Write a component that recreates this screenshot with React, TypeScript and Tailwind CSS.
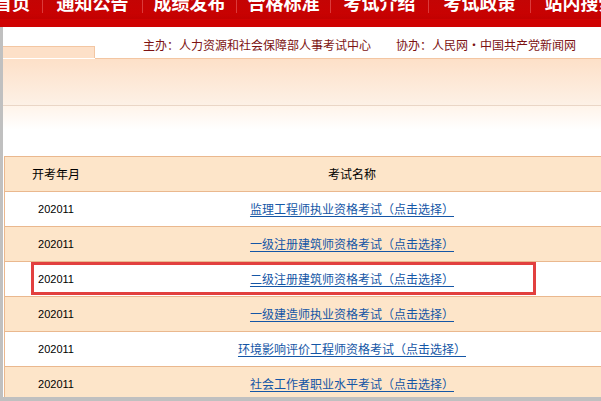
const cjk = { fontFamily: '"Noto Sans CJK SC", "Noto Sans", sans-serif' };
const digits = { fontFamily: '"Liberation Sans", Arial, sans-serif' };

const navItems = [
  { label: '首页', w: 'w-[60px]' },
  { label: '通知公告', w: 'w-[99px]' },
  { label: '成绩发布', w: 'w-[93px]' },
  { label: '合格标准', w: 'w-[93px]' },
  { label: '考试介绍', w: 'w-[97px]' },
  { label: '考试政策', w: 'w-[101px]' },
  { label: '站内搜索', w: 'w-[99px]' },
];

const exams = [
  '监理工程师执业资格考试（点击选择）',
  '一级注册建筑师资格考试（点击选择）',
  '二级注册建筑师资格考试（点击选择）',
  '一级建造师执业资格考试（点击选择）',
  '环境影响评价工程师资格考试（点击选择）',
  '社会工作者职业水平考试（点击选择）',
];

function NavBar() {
  return (
    <div className="relative h-[27px] shrink-0 overflow-hidden bg-gradient-to-b from-[#c40404] via-[#c80202] to-[#b80000]" style={cjk}>
      <div className="absolute bottom-0 left-0 right-0 h-[8px] bg-[#cf0202]" />
      <div className="relative -ml-[18px] flex h-[18px] items-start">
        {navItems.map((item, i) => (
          <div key={item.label} className="flex items-start">
            {i > 0 && <div className="h-[13px] w-px bg-[#dc3a3a]" />}
            <div className={`${item.w} -mt-[7px] whitespace-nowrap text-center text-[18px] font-bold leading-[18px] text-white`}>
              {item.label}
            </div>
          </div>
        ))}
      </div>
    </div>
  );
}

function Banner() {
  return (
    <div>
      <div className="flex h-[31px] items-end">
        <div className="h-[12px] w-[92px] shrink-0 border-r border-t border-[#f3c6a2] bg-[#fde0c8]" />
        <div className="ml-[48px] flex gap-[25px] pb-[6px] text-[12px] leading-[14px] text-[#7c1212]" style={cjk}>
          <span className="whitespace-nowrap">主办：人力资源和社会保障部人事考试中心</span>
          <span className="whitespace-nowrap">协办：人民网・中国共产党新闻网</span>
        </div>
      </div>
      <div className="ml-[92px] h-px bg-[#f3c6a2]" />
      <div className="h-[46px] bg-gradient-to-b from-[#fde0c8] to-[#fdf1e6]" />
      <div className="h-px bg-[#ead6c6]" />
      <div className="h-[24px] bg-gradient-to-b from-[#fff4ea] to-white" />
    </div>
  );
}

function ExamTable() {
  return (
    <div className="ml-[1px] mt-[26px] w-[700px] border-l border-t border-[#eab88e]" style={cjk}>
      <div className="flex h-[35px] items-center border-b border-[#eab88e] bg-[#fde5c9] text-[12px] text-black">
        <div className="w-[102px] text-center">开考年月</div>
        <div className="w-[490px] text-center">考试名称</div>
      </div>
      {exams.map((name, i) => (
        <div
          key={name}
          className={`relative flex h-[35px] items-center border-b border-[#eab88e] text-[12px] ${i % 2 === 1 ? 'bg-[#fde5c9]' : 'bg-white'}`}
        >
          <div className="w-[102px] text-center text-[11px] text-black" style={digits}>202011</div>
          <div className="w-[490px] text-center">
            <a href="#" className="text-[#1456a6] underline underline-offset-2">{name}</a>
          </div>
          {i === 2 && (
            <div className="pointer-events-none absolute left-[26px] top-0 h-[33px] w-[505px] border-[3px] border-[#e2403f]" />
          )}
        </div>
      ))}
    </div>
  );
}

export default function App() {
  return (
    <div className="flex h-[401px] w-[601px] flex-col overflow-hidden bg-white">
      <NavBar />
      <div className="flex min-h-0 flex-1">
        <div className="w-[3px] shrink-0 bg-[#c0c0c0]" />
        <div className="min-w-0 flex-1 overflow-hidden">
          <Banner />
          <ExamTable />
        </div>
      </div>
      <div className="h-[4px] shrink-0 bg-[#c0c0c0]" />
    </div>
  );
}
